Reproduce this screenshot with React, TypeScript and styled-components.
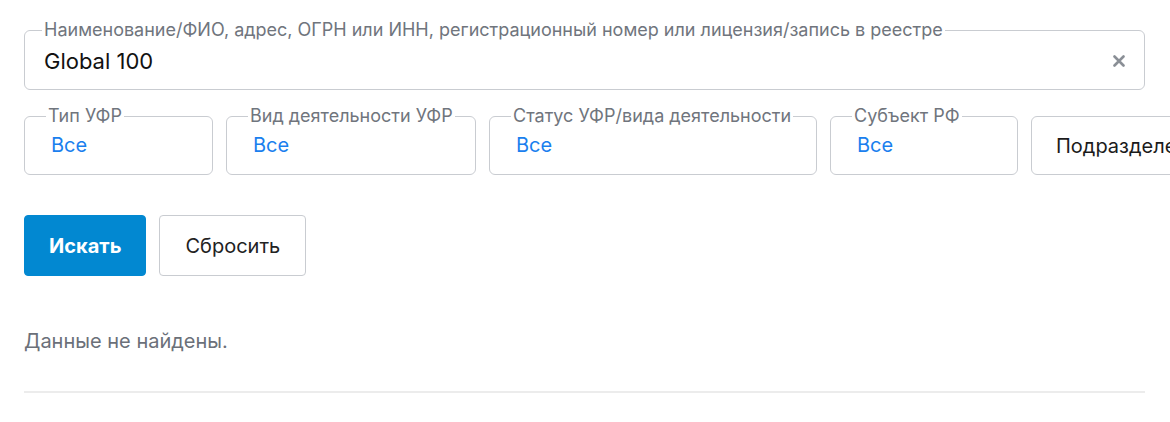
import React from "react";
import styled, { createGlobalStyle } from "styled-components";

const GlobalStyle = createGlobalStyle`
  html, body {
    margin: 0;
    padding: 0;
    background: #fff;
    font-family: Inter, "Noto Sans", "Liberation Sans", sans-serif;
  }
  * {
    box-sizing: border-box;
  }
`;

const Page = styled.div`
  padding: 21px 25px 0 24px;
  width: 1170px;
  overflow: hidden;
`;

const Field = styled.fieldset<{ $width?: number; $padX: number; $padTop: number }>`
  margin: 0;
  min-width: 0;
  flex: none;
  width: ${(p) => (p.$width ? `${p.$width}px` : "100%")};
  border: 1px solid #c9ccd1;
  border-radius: 6px;
  padding: ${(p) => p.$padTop}px ${(p) => p.$padX}px 15px;
`;

const Legend = styled.legend<{ $shift: number }>`
  padding: 0 2px;
  margin-left: ${(p) => p.$shift}px;
  font-size: 18px;
  line-height: 18px;
  color: #70757d;
  white-space: nowrap;
`;

const SearchLine = styled.div`
  display: flex;
  align-items: center;
  height: 26px;
`;

const Value = styled.span`
  flex: 1;
  font-size: 22px;
  line-height: 26px;
  color: #111;
`;

const Clear = styled.button`
  border: none;
  background: none;
  padding: 0;
  margin-right: 0;
  display: flex;
  align-items: center;
  cursor: pointer;
`;

const FilterRow = styled.div`
  display: flex;
  gap: 13px;
  margin-top: 17px;
  width: 1200px;
`;

const SelectValue = styled.div`
  font-size: 20px;
  line-height: 24px;
  color: #1a80ee;
`;

const PlainBox = styled.div`
  flex: none;
  width: 200px;
  height: 59px;
  margin-top: 9px;
  border: 1px solid #c9ccd1;
  border-radius: 6px;
  padding: 0 24px;
  display: flex;
  align-items: center;
  font-size: 20px;
  color: #1b1b1b;
  white-space: nowrap;
  overflow: hidden;
`;

const Actions = styled.div`
  display: flex;
  gap: 13px;
  margin-top: 40px;
`;

const Button = styled.button<{ $primary?: boolean }>`
  height: 61px;
  padding: 0 ${(p) => (p.$primary ? 24 : 25)}px;
  border-radius: 4px;
  font-family: inherit;
  font-size: 20px;
  cursor: pointer;
  border: 1px solid ${(p) => (p.$primary ? "#0288d1" : "#c9ccd1")};
  background: ${(p) => (p.$primary ? "#0288d1" : "#fff")};
  color: ${(p) => (p.$primary ? "#fff" : "#222")};
  font-weight: ${(p) => (p.$primary ? 700 : 400)};
`;

const Empty = styled.p`
  margin: 53px 0 0;
  font-size: 20px;
  line-height: 24px;
  color: #6b7079;
`;

const Divider = styled.hr`
  margin: 38px 0 0;
  border: none;
  border-top: 2px solid #ececec;
`;

const filters = [
  { label: "Тип УФР", width: 189 },
  { label: "Вид деятельности УФР", width: 250 },
  { label: "Статус УФР/вида деятельности", width: 328 },
  { label: "Субъект РФ", width: 188 },
];

export default function App() {
  return (
    <>
      <GlobalStyle />
      <Page>
        <Field $padX={19} $padTop={9}>
          <Legend $shift={-2}>
            Наименование/ФИО, адрес, ОГРН или ИНН, регистрационный номер или
            лицензия/запись в реестре
          </Legend>
          <SearchLine>
            <Value>Global 100</Value>
            <Clear aria-label="Очистить">
              <svg width="12" height="12" viewBox="0 0 12 12">
                <path
                  d="M1.5 1.5 L10.5 10.5 M10.5 1.5 L1.5 10.5"
                  stroke="#8a8f96"
                  strokeWidth="2.6"
                  strokeLinecap="round"
                />
              </svg>
            </Clear>
          </SearchLine>
        </Field>

        <FilterRow>
          {filters.map((f) => (
            <Field key={f.label} $width={f.width} $padX={26} $padTop={8}>
              <Legend $shift={-5}>{f.label}</Legend>
              <SelectValue>Все</SelectValue>
            </Field>
          ))}
          <PlainBox>Подразделение</PlainBox>
        </FilterRow>

        <Actions>
          <Button $primary>Искать</Button>
          <Button>Сбросить</Button>
        </Actions>

        <Empty>Данные не найдены.</Empty>
        <Divider />
      </Page>
    </>
  );
}
